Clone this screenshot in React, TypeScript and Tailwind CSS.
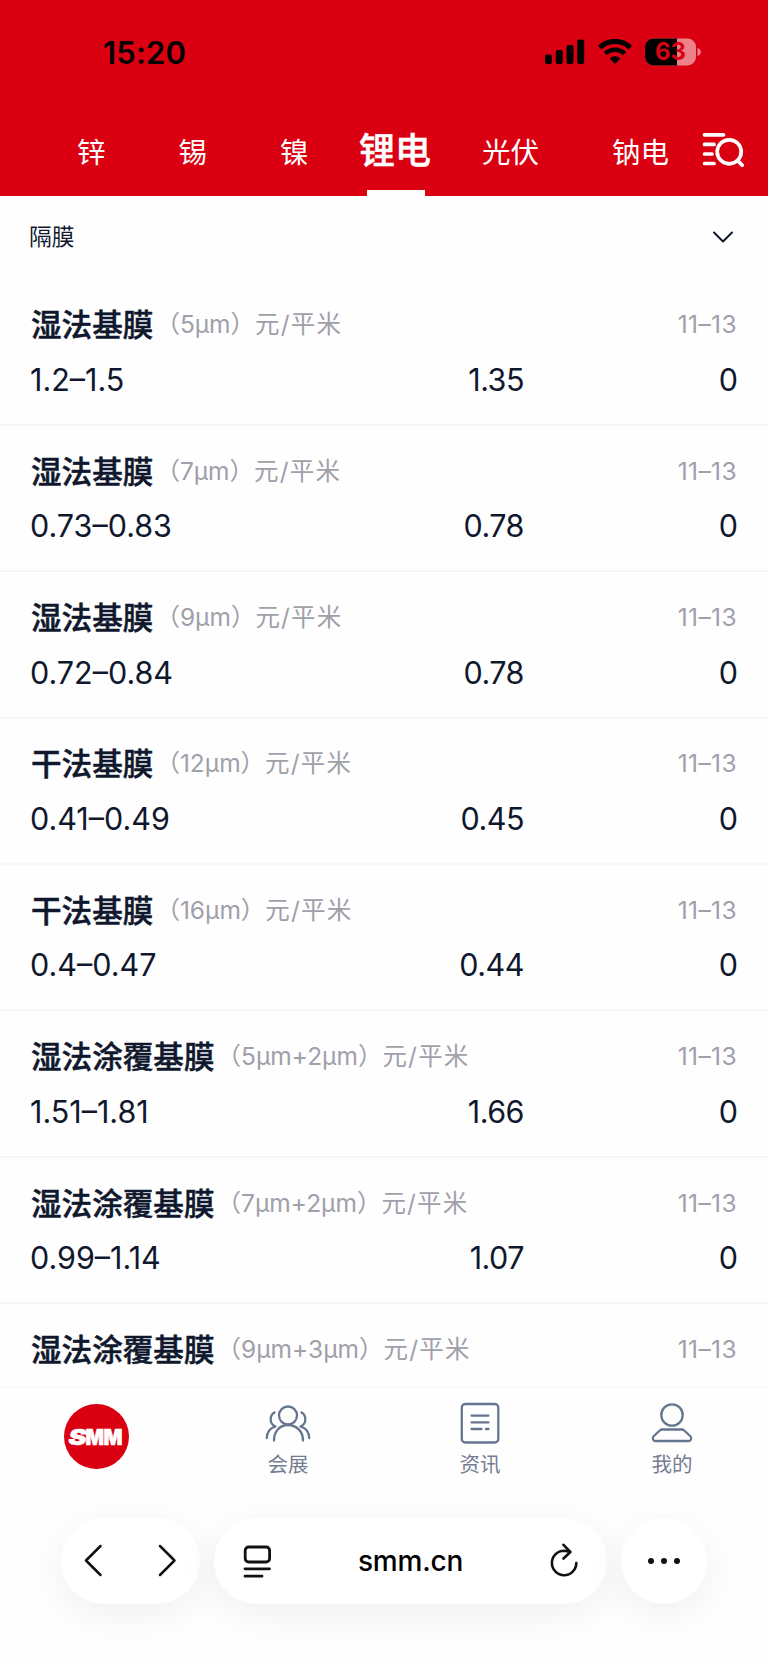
import type { ReactNode } from "react";

const FONT = "font-['Inter','Noto_Sans_CJK_SC',sans-serif]";

const prices = [
  { name: "湿法基膜", spec: "5μm", range: "1.2–1.5", avg: "1.35" },
  { name: "湿法基膜", spec: "7μm", range: "0.73–0.83", avg: "0.78" },
  { name: "湿法基膜", spec: "9μm", range: "0.72–0.84", avg: "0.78" },
  { name: "干法基膜", spec: "12μm", range: "0.41–0.49", avg: "0.45" },
  { name: "干法基膜", spec: "16μm", range: "0.4–0.47", avg: "0.44" },
  { name: "湿法涂覆基膜", spec: "5μm+2μm", range: "1.51–1.81", avg: "1.66" },
  { name: "湿法涂覆基膜", spec: "7μm+2μm", range: "0.99–1.14", avg: "1.07" },
  { name: "湿法涂覆基膜", spec: "9μm+3μm", range: "", avg: "" },
];

const StatusBar = () => (
  <div className="flex h-[104px] items-center justify-between pl-[103px] pr-[66px]">
    <span className="text-[31px] font-semibold leading-none tracking-[0.2px] text-black">15:20</span>
    <div className="flex items-center gap-[13px]">
      <svg width="40" height="26" viewBox="0 0 40 26">
        <rect x="0" y="15.5" width="7" height="9.5" rx="2" />
        <rect x="10.8" y="11" width="7" height="14" rx="2" />
        <rect x="21.5" y="6" width="7" height="19" rx="2" />
        <rect x="32.2" y="0.5" width="7" height="24.5" rx="2" />
      </svg>
      <svg width="34" height="26" viewBox="0 0 34 26" fill="none" stroke="#000">
        <path d="M1.7 8.6a22 22 0 0 1 30.6 0" strokeWidth="5" />
        <path d="M7.4 14.6a13.8 13.8 0 0 1 19.2 0" strokeWidth="4.6" />
        <path d="M11.8 19.4a7.4 7.4 0 0 1 10.4 0L17 25z" fill="#000" stroke="none" />
      </svg>
      <svg width="57" height="28" viewBox="0 0 57 28">
        <clipPath id="cell">
          <rect x="0" y="0.5" width="51" height="27" rx="8.5" />
        </clipPath>
        <g clipPath="url(#cell)">
          <rect width="51" height="28" fill="#ee808a" />
          <rect width="32" height="28" fill="#000" />
        </g>
        <path d="M52.5 10c2 .6 3.3 2 3.3 4s-1.3 3.4-3.3 4z" fill="#ee808a" />
        <text x="25.5" y="22.3" textAnchor="middle" fontSize="24" fontWeight="700" fill="#da0011">63</text>
      </svg>
    </div>
  </div>
);

const Tabs = () => (
  <nav className="flex h-[92px] items-center pl-[77px] text-[28.5px] leading-none text-white">
    <span className="mr-[73px] mt-[7px]">锌</span>
    <span className="mr-[73px] mt-[7px]">锡</span>
    <span className="mr-[50.5px] mt-[7px]">镍</span>
    <span className="relative flex h-full items-center text-[36px] font-medium [-webkit-text-stroke:0.5px_#fff]">
      <span className="mt-px">锂电</span>
      <i className="absolute bottom-0 left-[7.5px] h-[6px] w-[58px] bg-white" />
    </span>
    <span className="ml-[51px] mr-[73px] mt-[7px]">光伏</span>
    <span className="mt-[7px]">钠电</span>
    <svg className="ml-[32px]" width="44" height="36" viewBox="0 0 44 36" fill="none" stroke="#fff" strokeWidth="3.7" strokeLinecap="round">
      <path d="M3.5 2.8h19M3.5 12.4h9.5M3.5 22h7.5M3.5 31.5h9.5" />
      <circle cx="28.2" cy="19.8" r="12" />
      <path d="M36.8 28.6l4.4 4.6" />
    </svg>
  </nav>
);

const PriceRow = ({ name, spec, range, avg }: (typeof prices)[number]) => (
  <li className="h-[146.4px] shrink-0 border-b-2 border-[#f6f6fa] px-[31px] pt-[26px]">
    <div className="flex h-[40px] items-center justify-between leading-none">
      <div className="flex items-center">
        <h3 className="text-[30.6px] font-medium [-webkit-text-stroke:0.5px_#10182e]">{name}</h3>
        <p className="-mt-[2px] ml-[2px] text-[24.5px] text-[#9fa0a9]">（{spec}）</p>
        <span className="-mt-[2px] text-[24.5px] tracking-[1.2px] text-[#9fa0a9]">元/平米</span>
      </div>
      <span className="-mt-[2px] text-[24.5px] tracking-[0.4px] text-[#9fa0a9]">11–13</span>
    </div>
    {range && (
      <div className="-ml-px mt-[13.5px] flex h-[42px] items-center text-[30.5px] leading-none">
        <span className="w-[294px]">{range}</span>
        <span className="w-[200px] text-right tracking-[-0.5px]">{avg}</span>
        <span className="-mr-px flex-1 text-right">0</span>
      </div>
    )}
  </li>
);

const NavItem = ({ label, children }: { label: string; children: ReactNode }) => (
  <div className="flex flex-1 flex-col items-center pt-[12px] text-[20.5px] leading-none text-[#757d93]">
    <svg width="48" height="48" viewBox="0 0 48 48" fill="none" stroke="#66758f" strokeWidth="2.3" strokeLinecap="round" strokeLinejoin="round">
      {children}
    </svg>
    <span className="mt-[7px]">{label}</span>
  </div>
);

const BottomNav = () => (
  <nav className="flex h-[105px] shrink-0 border-t-2 border-[#fafafa]">
    <div className="flex flex-1 justify-center pt-[16px]">
      <svg width="65" height="65" viewBox="0 0 65 65">
        <circle cx="32.5" cy="32.5" r="32.5" fill="#da0011" />
        <g fontSize="21.5" fontWeight="900" fill="#fff" stroke="#fff" strokeWidth="0.6">
          <text x="4.5" y="40.5" fontStyle="italic" textLength="18" lengthAdjust="spacingAndGlyphs">S</text>
          <text x="21.5" y="40.5" textLength="18.5" lengthAdjust="spacingAndGlyphs">M</text>
          <text x="39.5" y="40.5" textLength="19" lengthAdjust="spacingAndGlyphs">M</text>
        </g>
      </svg>
    </div>
    <NavItem label="会展">
      <circle cx="24" cy="15.5" r="9" />
      <path d="M10 40.5C10 31 16 25 24 25s15 6 15 15.5" />
      <path d="M10.5 12.5C5.5 15 5 24 11.5 26.5C6 28 3 32 2.8 38" />
      <path d="M37.5 12.5C42.5 15 43 24 36.5 26.5C42 28 45 32 45.2 38" />
    </NavItem>
    <NavItem label="资讯">
      <rect x="5.8" y="4" width="36.5" height="38.5" rx="3.5" />
      <path d="M15.5 15.7h17M15.5 22.3h17M15.5 29h10M30 29h2.5" />
    </NavItem>
    <NavItem label="我的">
      <circle cx="24" cy="15" r="10.7" />
      <path d="M14 29.5h20c1 0 1.5.3 2.2 1l6 5.5c2 2 1 5-1.7 5H7.5c-2.7 0-3.7-3-1.7-5l6-5.5c.7-.7 1.2-1 2.2-1z" />
    </NavItem>
  </nav>
);

const PILL = "flex h-[86px] items-center rounded-full bg-white shadow-[0_10px_40px_rgba(0,0,0,0.06)]";

const BrowserBar = () => (
  <footer className="flex h-[174px] shrink-0 gap-[14px] pl-[61px] pt-[27px]">
    <div className={`${PILL} w-[139px] justify-between px-[23px]`}>
      <svg width="20" height="34" viewBox="0 0 20 34" fill="none" stroke="#111" strokeWidth="2.5" strokeLinecap="round" strokeLinejoin="round">
        <path d="M16.5 2L2 16.5L16.5 31" />
      </svg>
      <svg width="20" height="34" viewBox="0 0 20 34" fill="none" stroke="#111" strokeWidth="2.5" strokeLinecap="round" strokeLinejoin="round">
        <path d="M3 2L17.5 16.5L3 31" />
      </svg>
    </div>
    <div className={`${PILL} w-[393px] justify-between px-[29px]`}>
      <svg width="30" height="34" viewBox="0 0 30 34" fill="none" stroke="#111" strokeWidth="2.8" strokeLinecap="round">
        <rect x="2.2" y="3" width="24.4" height="15" rx="3.5" />
        <path d="M2 24.8h24.5M2 32.2h17" />
      </svg>
      <span className="text-[28px] font-medium leading-none tracking-[-0.2px] text-black">smm.cn</span>
      <svg width="30" height="36" viewBox="0 0 30 36" fill="none" stroke="#111" strokeWidth="2.6" strokeLinecap="round" strokeLinejoin="round">
        <path d="M28.3 20A12.2 12.2 0 1 1 16 7.8L22 8.8" />
        <path d="M15.5 1.8L22.3 9L15.5 15.5" />
      </svg>
    </div>
    <div className={`${PILL} w-[86px] justify-center gap-[6.5px]`}>
      <i className="size-[6.5px] rounded-full bg-[#111]" />
      <i className="size-[6.5px] rounded-full bg-[#111]" />
      <i className="size-[6.5px] rounded-full bg-[#111]" />
    </div>
  </footer>
);

export default function App() {
  return (
    <div className={`${FONT} flex h-[1665px] w-[768px] flex-col overflow-hidden bg-[#fefefe] text-[#10182e]`}>
      <header className="h-[196px] shrink-0 bg-[#da0011]">
        <StatusBar />
        <Tabs />
      </header>
      <div className="flex h-[83.5px] shrink-0 items-center justify-between pl-[29px] pr-[34px] text-[22.7px] leading-none">
        <span>隔膜</span>
        <svg className="-mt-[2px]" width="22" height="14" viewBox="0 0 22 14" fill="none" stroke="#10182e" strokeWidth="2" strokeLinecap="round" strokeLinejoin="round">
          <path d="M2 2.5L11 11.5L20 2.5" />
        </svg>
      </div>
      <ul className="flex h-[1106.5px] shrink-0 flex-col overflow-hidden">
        {prices.map((p) => (
          <PriceRow key={p.name + p.spec} {...p} />
        ))}
      </ul>
      <BottomNav />
      <BrowserBar />
    </div>
  );
}
